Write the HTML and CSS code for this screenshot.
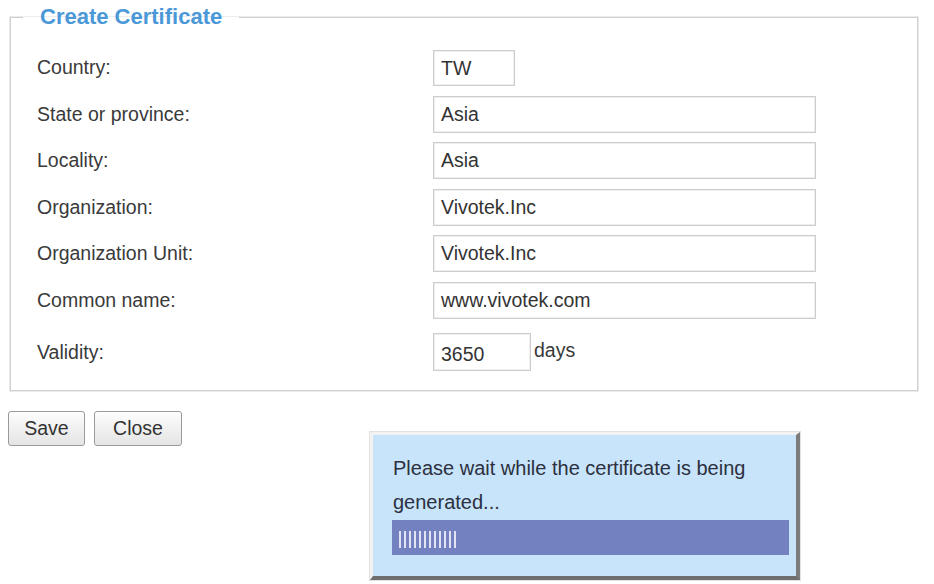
FILE: index.html
```html
<!DOCTYPE html>
<html>
<head>
<meta charset="utf-8">
<link rel="stylesheet" href="styles.css">
</head>
<body>
<fieldset class="cert">
  <legend class="cert-title">Create Certificate</legend>
  <div class="row"><span class="lbl">Country:</span><span class="field short">TW</span></div>
  <div class="row"><span class="lbl">State or province:</span><span class="field">Asia</span></div>
  <div class="row"><span class="lbl">Locality:</span><span class="field">Asia</span></div>
  <div class="row"><span class="lbl">Organization:</span><span class="field">Vivotek.Inc</span></div>
  <div class="row"><span class="lbl">Organization Unit:</span><span class="field">Vivotek.Inc</span></div>
  <div class="row"><span class="lbl">Common name:</span><span class="field">www.vivotek.com</span></div>
  <div class="row last"><span class="lbl">Validity:</span><span class="field days-box">3650</span><span class="unit">days</span></div>
</fieldset>
<div class="buttons">
  <button class="btn save">Save</button>
  <button class="btn close">Close</button>
</div>
<div class="wait">
  <p class="wait-text">Please wait while the certificate is being<br>generated...</p>
  <div class="bar"><span class="stripes"></span></div>
</div>
</body>
</html>
```
FILE: styles.css
```css
html, body {
  margin: 0;
  padding: 0;
  background: #ffffff;
}
body {
  font-family: "Liberation Sans", Arial, sans-serif;
  color: #333333;
  position: relative;
  width: 934px;
  height: 584px;
  overflow: hidden;
}
.cert {
  margin: 0 16px 0 10px;
  padding: 15px 20px 19px 26px;
  border: 1px solid #cfcfcf;
  box-shadow: 0 0 0 1px #ececec;
  min-width: 0;
}
.cert-title {
  margin-left: -14px;
  padding: 0 17px;
  font-size: 22px;
  font-weight: bold;
  line-height: 34px;
  color: #4a98d8;
}
.row {
  display: flex;
  align-items: center;
  height: 37px;
  margin-bottom: 9.5px;
}
.row.last {
  margin-top: 15px;
  margin-bottom: 0;
}
.lbl {
  width: 396px;
  flex: none;
  font-size: 19.5px;
  color: #3a3a3a;
}
.field {
  box-sizing: border-box;
  width: 383px;
  height: 37px;
  border: 1px solid #cdcdcd;
  box-shadow: inset 0 0 0 1px #eeeeee;
  padding: 0 7px;
  font-size: 19.5px;
  line-height: 35px;
  color: #333333;
  background: #ffffff;
  white-space: nowrap;
}
.field.short {
  width: 82px;
  height: 36px;
}
.field.days-box {
  width: 98px;
  height: 38px;
  line-height: 40px;
}
.unit {
  margin-left: 3px;
  font-size: 19.5px;
  margin-top: -4px;
  color: #3a3a3a;
}
.buttons {
  display: flex;
  gap: 9px;
  margin: 20px 0 0 8px;
}
.btn {
  box-sizing: border-box;
  height: 35px;
  padding: 0;
  border: 1px solid #9a9a9a;
  border-radius: 3px;
  background: linear-gradient(#fdfdfd, #e4e4e4);
  font-family: "Liberation Sans", Arial, sans-serif;
  font-size: 19.5px;
  color: #333333;
}
.btn.save { width: 77px; }
.btn.close { width: 88px; }
.wait {
  position: absolute;
  left: 370px;
  top: 432px;
  width: 430px;
  height: 148px;
  box-sizing: border-box;
  background: #c7e4fb;
  border-top: 3px solid #f2f2f2;
  border-left: 3px solid #f2f2f2;
  border-right: 4px solid #7c7c7c;
  border-bottom: 4px solid #6e6e6e;
  box-shadow: 0 0 0 1px #e2e2e2;
  padding: 16px 7px 0 19px;
}
.wait-text {
  margin: 0 0 1px 1px;
  font-size: 20px;
  line-height: 34px;
  color: #2c3040;
}
.bar {
  height: 35px;
  background: #7481c0;
  position: relative;
}
.stripes {
  position: absolute;
  left: 7px;
  top: 11px;
  width: 58px;
  height: 17px;
  background: repeating-linear-gradient(90deg, #e2e4f6 0 2px, transparent 2px 5px);
}
```
